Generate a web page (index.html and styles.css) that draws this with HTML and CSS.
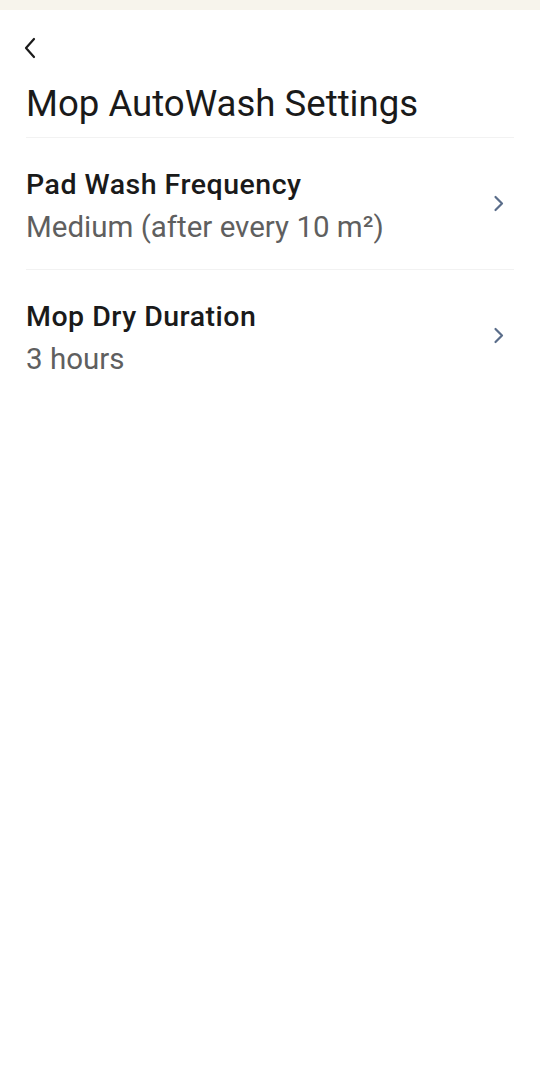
FILE: index.html
```html
<!DOCTYPE html>
<html>
<head>
    <meta charset="utf-8">
    <title>Mop AutoWash Settings</title>
    <meta name="viewport" content="width=device-width, initial-scale=1">
    <link rel="stylesheet" href="styles.css">
</head>
<body>
    <div class="status-bar"></div>

    <div class="page">
        <div class="top-bar">
            <svg class="back-icon" width="14" height="22" viewBox="0 0 14 22">
                <path d="M11 2 L3 11 L11 20" fill="none" stroke="#1a1a1a" stroke-width="2.2" stroke-linecap="round" stroke-linejoin="round"/>
            </svg>
        </div>

        <div class="page-title">Mop AutoWash Settings</div>

        <div class="settings-list">
            <div class="setting-row">
                <div class="setting-text">
                    <div class="setting-name">Pad Wash Frequency</div>
                    <div class="setting-value">Medium (after every 10 m²)</div>
                </div>
                <svg class="chevron" width="12" height="17" viewBox="0 0 12 17">
                    <path d="M2.5 2 L9 8.5 L2.5 15" fill="none" stroke="#5a6d8a" stroke-width="2.2" stroke-linecap="round" stroke-linejoin="round"/>
                </svg>
            </div>
            <div class="setting-row">
                <div class="setting-text">
                    <div class="setting-name">Mop Dry Duration</div>
                    <div class="setting-value">3 hours</div>
                </div>
                <svg class="chevron" width="12" height="17" viewBox="0 0 12 17">
                    <path d="M2.5 2 L9 8.5 L2.5 15" fill="none" stroke="#5a6d8a" stroke-width="2.2" stroke-linecap="round" stroke-linejoin="round"/>
                </svg>
            </div>
        </div>
    </div>
</body>
</html>
```

FILE: styles.css
```css
body, html {
    margin: 0;
    height: 100%;
    background: #fff;
    font-family: "Roboto", "Noto Sans", sans-serif;
    color: #1a1a1a;
}

.status-bar {
    height: 10px;
    background: #f7f4ec;
}

.page {
    padding: 0 26px;
}

.top-bar {
    height: 72px;
    display: flex;
    align-items: center;
}

.back-icon {
    display: block;
    margin-left: -3px;
    margin-top: 3px;
}

.page-title {
    font-size: 36.6px;
    line-height: 44px;
    padding-bottom: 11px;
    border-bottom: 1px solid #f2f2f2;
}

.setting-row {
    display: flex;
    align-items: center;
    justify-content: space-between;
    padding: 29px 0 22px;
    border-bottom: 1px solid #f2f2f2;
}

.setting-row:last-child {
    border-bottom: none;
}

.setting-name {
    font-size: 28.5px;
    font-weight: 500;
    letter-spacing: 0.5px;
    line-height: 36px;
    color: #1a1a1a;
}

.setting-value {
    font-size: 29.5px;
    line-height: 40px;
    margin-top: 4px;
    color: #5f5f5f;
}

.chevron {
    display: block;
    margin-right: 9px;
    margin-bottom: 7px;
}
```
